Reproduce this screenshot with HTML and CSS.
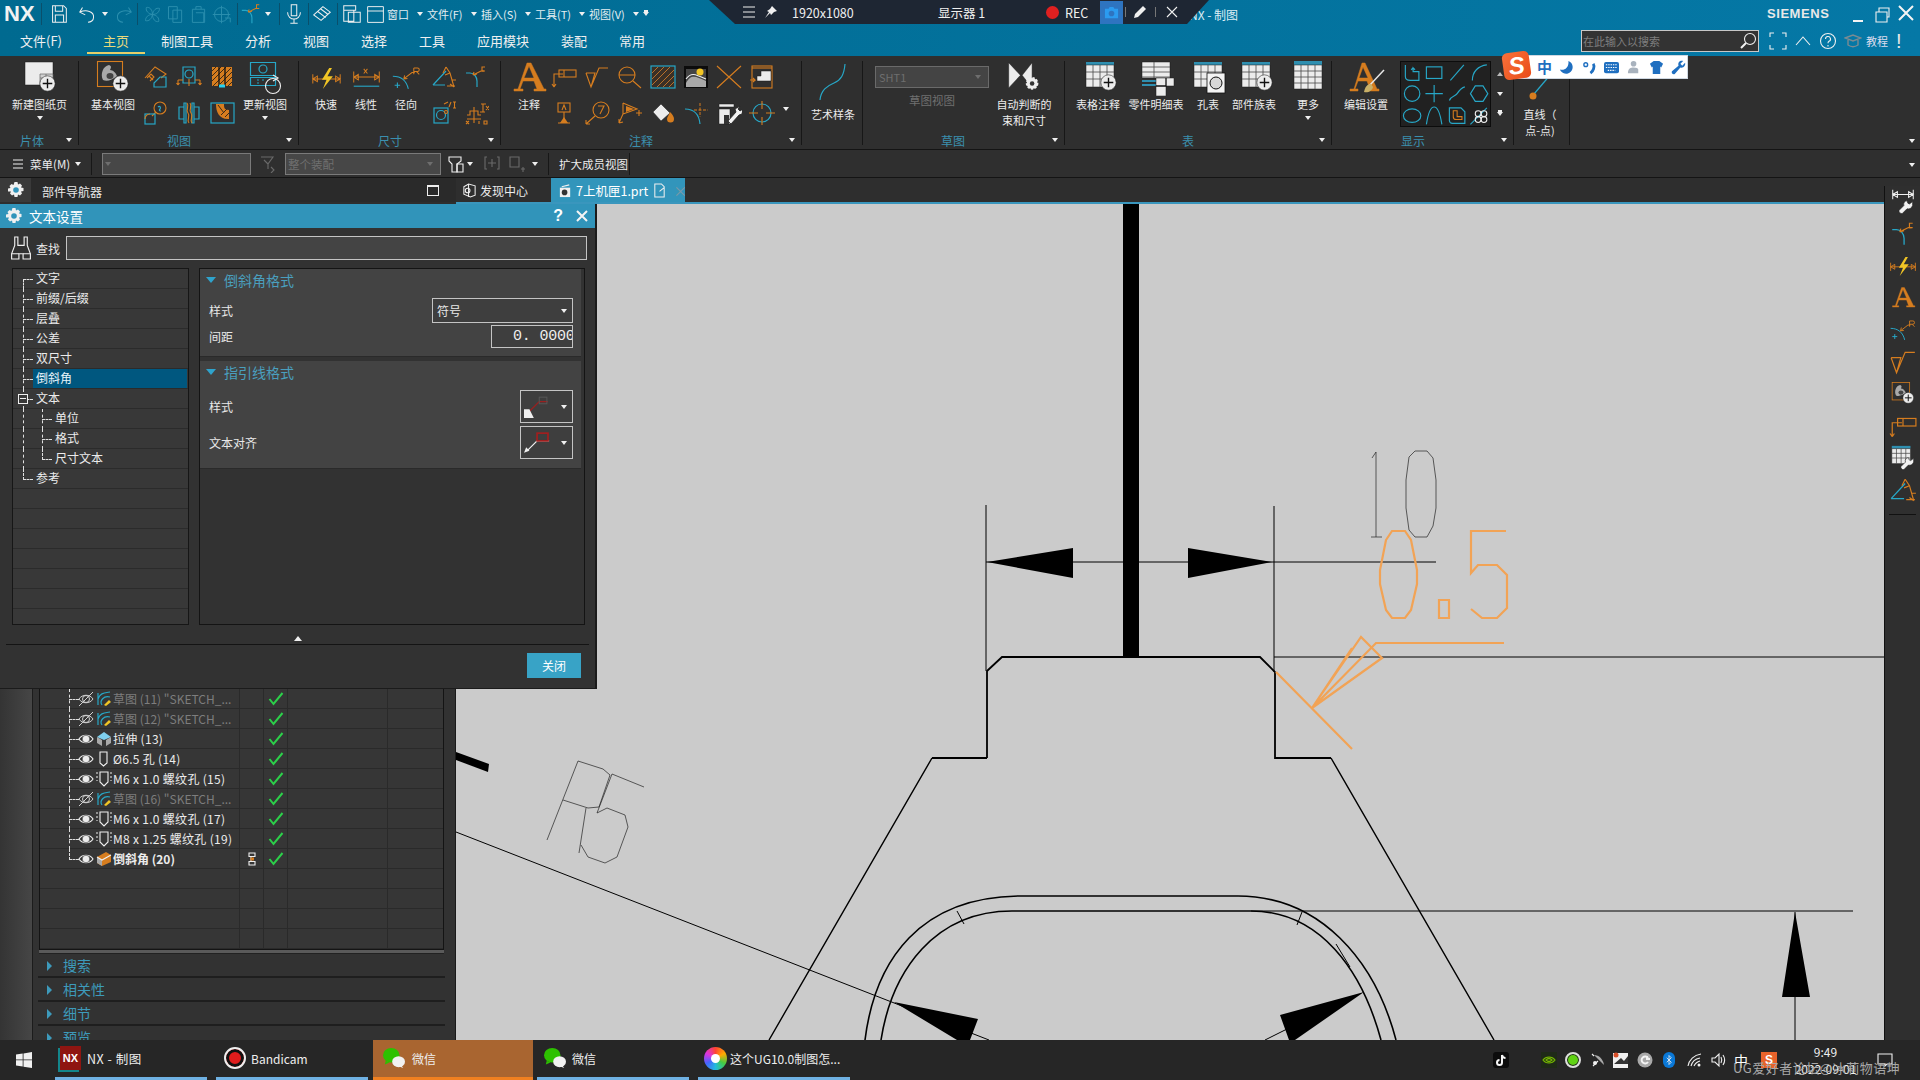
FILE: index.html
```html
<!DOCTYPE html>
<html lang="zh-CN">
<head>
<meta charset="utf-8">
<title>NX - 制图</title>
<link rel="stylesheet" href="styles.css">
</head>
<body>
<svg class="defs" aria-hidden="true">
<defs>
<symbol id="pl" viewBox="0 0 16 16"><circle cx="8" cy="8" r="7.2" class="wf"/><path d="M8 3.5v9M3.5 8h9" class="k"/></symbol>
<symbol id="new" viewBox="0 0 40 36"><rect x="5" y="2" width="28" height="23" class="wf"/><path d="M20 14h13v11H20zM20 18h13M20 21.500h13M26 14v11" class="g"/><use href="#pl" x="19" y="15" width="17" height="17"/></symbol>
<symbol id="base" viewBox="0 0 40 36"><rect x="4.500" y="1.500" width="25" height="25" class="o"/><path d="M10 20c-3-6 0-14 6-15 3 1 2 3 1 5 3 0 6 3 7 6-5 4-10 6-14 4z" class="gf"/><ellipse cx="17" cy="16" rx="3.500" ry="3" class="dk"/><use href="#pl" x="19" y="15" width="17" height="17"/></symbol>
<symbol id="upd" viewBox="0 0 40 36"><path d="M5.500 2.500h25v13h-25zM5.500 17.500h25v8h-25z" class="c"/><circle cx="18" cy="9" r="4" class="c"/><path d="M12 20h2M17 20h2M12 23h2" class="c"/><circle cx="28" cy="26" r="7.500" class="w"/><path d="M28 15l5 3-5 3" class="w"/></symbol>
<symbol id="v1" viewBox="0 0 26 24"><path d="M2 13L12 2l11 7-5 4" class="o"/><path d="M4 13l4-4 3 3-4 4M6 11l4 4" class="o"/><path d="M11 22h12V12h-6l-6 6z" class="c"/></symbol>
<symbol id="v2" viewBox="0 0 26 24"><path d="M7 2h12v16H7z" class="c"/><circle cx="13" cy="9" r="4" class="c"/><path d="M2 15v5M2 20l-1.500-2M2 20l1.500-2M24 15v5M24 20l-1.500-2M24 20l1.500-2M2 15h5M19 15h5M13 14v7" class="o"/></symbol>
<symbol id="v3" viewBox="0 0 26 24"><rect x="3" y="2" width="20" height="19" class="of"/><path d="M3 6l4-4M3 11l9-9M3 16l14-14M4 21l18-18M9 21l14-14M14 21l9-9M19 21l4-4" class="dk2"/><path d="M10 2v19M16 2v19" class="k"/><path d="M10 21h6" class="c2"/></symbol>
<symbol id="v4" viewBox="0 0 26 24"><circle cx="17" cy="7" r="6" class="o"/><path d="M13 11L9 15" class="o"/><path d="M15 6c2-2 3 1 2 2s-1 2 1 2" class="c"/><rect x="2" y="13" width="10" height="10" class="c"/><path d="M7 13a5 5 0 0 0-5 5" class="o"/></symbol>
<symbol id="v5" viewBox="0 0 26 24"><path d="M3 6h5v12H3zM18 6h5v12h-5zM8 2h2v20H8zM16 2h2v20h-2z" class="c"/><path d="M11 2c3 4-2 6 1 10s-2 6 1 10M14 2c3 4-2 6 1 10s-2 6 1 10" class="o"/></symbol>
<symbol id="v6" viewBox="0 0 26 24"><rect x="2" y="2" width="23" height="20" class="c"/><path d="M7 3c0 8 3 15 12 15h1V9c-5 0-5-3-5-6z" class="of"/><path d="M9 4l6 8M12 14l6-6M16 16l4-4" class="dk2"/></symbol>
<symbol id="dq" viewBox="0 0 34 26"><path d="M2 9v10M32 9v10M2 14h30M2 14l5-3v6zM32 14l-5-3v6z" class="o"/><path d="M20 2l-8 13h5l-4 10 11-14h-6l5-9z" class="yf"/></symbol>
<symbol id="dl" viewBox="0 0 34 26"><path d="M3 6v12M31 6v12M3 12h28M3 12l5-3v6zM31 12l-5-3v6z" class="o"/><path d="M14 3l4 5M18 3l-4 5" class="o"/><path d="M3 22h28" class="c"/></symbol>
<symbol id="dr" viewBox="0 0 34 26"><path d="M2 11c9 0 15 5 17 14" class="c"/><path d="M4 21h6M7 18v6" class="c"/><path d="M14 14l9-7h3M14 14l4-.5M14 14l1-4" class="o"/><path d="M25 2v7M25 2h4a2 2 0 0 1 0 4h-4M28 6l3 3" class="o"/></symbol>
<symbol id="da" viewBox="0 0 26 24"><path d="M2 20L15 6M2 20h12" class="c"/><path d="M15 2l4 6 4 14M15 2l-3 6M19 8l-5 2M21 15h4M19 19l4 3M16 21h8" class="o"/></symbol>
<symbol id="dc" viewBox="0 0 26 24"><path d="M3 8h4c4 0 7 4 7 8v6" class="c"/><path d="M10 10l8-4h3M10 10l4-1M10 10l1-3" class="o"/><path d="M22 2h-3v4h3" class="o"/></symbol>
<symbol id="dh" viewBox="0 0 26 24"><rect x="3" y="7" width="14" height="15" class="c"/><circle cx="10" cy="14" r="4.500" class="c"/><path d="M13 3l4-2M18 6l2-5M22 1h3M22 7h3M23.500 1v6" class="o"/><circle cx="15" cy="11" r="1.500" class="o"/></symbol>
<symbol id="do" viewBox="0 0 26 24"><path d="M4 14h3v-4h8v4h3M11 6v16M4 18h14" class="o"/><path d="M18 3h5M20 3v8M17 11h5M23 5l3 4M26 5l-3 4M3 20l3 3M6 20l-3 3M16 20v3M21 20h3v3h-3z" class="o"/></symbol>
<symbol id="big-a" viewBox="0 0 40 36"><path d="M5 31h9v-2h-3l3-8h11l3 8h-3v2h12v-2h-2L22 3h-4L9 29H5zM15 18l5-12 5 12z" class="of2"/></symbol>
<symbol id="nl" viewBox="0 0 26 24"><path d="M3 22V9h9M3 22l-2-3M3 22l2-3" class="o"/><rect x="8" y="5" width="17" height="7" class="o"/><path d="M13 5v7" class="o"/></symbol>
<symbol id="nr" viewBox="0 0 26 24"><path d="M2 8l5 14L15 3h9M2 8h9l-4 14" class="o"/></symbol>
<symbol id="nz" viewBox="0 0 26 24"><circle cx="10" cy="10" r="8" class="o"/><path d="M2 10h16M16 16l8 7" class="o"/></symbol>
<symbol id="nh" viewBox="0 0 26 24"><rect x="2" y="2" width="22" height="20" class="hb"/><path d="M2 8l6-6M2 14L14 2M2 20L20 2M7 22L24 5M13 22l11-11M19 22l5-5" class="ohl"/><rect x="1" y="1" width="24" height="22" class="c"/></symbol>
<symbol id="ni" viewBox="0 0 26 24"><rect x="1" y="1" width="24" height="22" class="kf"/><path d="M3 4h20v18H3z" class="dk"/><path d="M3 18c5-9 9-7 20-2v6H3z" class="gf"/><path d="M3 14c5-7 9-5 20 0" class="w"/><circle cx="17" cy="7" r="3.500" class="yf"/></symbol>
<symbol id="nx" viewBox="0 0 26 24"><path d="M1 1l24 22M25 1L1 23" class="o"/></symbol>
<symbol id="nf" viewBox="0 0 26 24"><rect x="3" y="1" width="20" height="22" class="o"/><path d="M3 3h20" class="o"/><path d="M12 6h10v10H8v-5h4z" class="wf"/><path d="M1 15h5l-2-2M6 15l-2 2" class="o"/></symbol>
<symbol id="nd" viewBox="0 0 26 24"><rect x="7" y="2" width="12" height="9" class="o"/><path d="M11 9l2-5 2 5M13 11v9M7 22h12" class="o"/><path d="M13 16l-4 6h8z" class="of"/></symbol>
<symbol id="nb" viewBox="0 0 26 24"><circle cx="17" cy="9" r="8" class="o"/><path d="M14 5h6l-4 8M11 15L2 23M2 23v-4M2 23h4" class="o"/></symbol>
<symbol id="ng" viewBox="0 0 26 24"><path d="M6 2v11l-4 9M2 22v-4M2 22l4-1M6 2l14 6-14 5" class="o"/><path d="M9 5l8 3-8 3z" class="of"/><path d="M19 12h6M22 9v6" class="o"/></symbol>
<symbol id="nm" viewBox="0 0 26 24"><path d="M11 3l9 9-9 8-8-9z" class="wf"/><path d="M20 11c3 3 4 5 4 7a3 3 0 0 1-7 0c0-2 2-4 3-7z" class="of"/></symbol>
<symbol id="nc" viewBox="0 0 26 24"><path d="M2 8c9 0 14 5 15 15" class="c"/><path d="M17 2v14M11 9h14" class="od"/></symbol>
<symbol id="nt" viewBox="0 0 26 24"><path d="M3 3h15v3H3zM3 8h11v15H3z" class="wf"/><path d="M8 14h5v9H8z" class="dkf"/><path d="M24 5l-5 3 1 3-8 9 3 3 8-9 3-1 1-5-3 2-2-2z" class="w2"/></symbol>
<symbol id="ntg" viewBox="0 0 26 24"><circle cx="13" cy="12" r="9" class="c"/><path d="M0 12h9M17 12h9M13 0v8M13 16v8" class="o"/></symbol>
<symbol id="spl" viewBox="0 0 40 44"><path d="M7 40c1-10 7-14 14-17 7-3 10-8 11-19" class="c"/></symbol>
<symbol id="auto" viewBox="0 0 40 40"><path d="M3 3l13 14L3 31zM29 3v28l-11-14z" class="wf"/><circle cx="29" cy="26" r="6" class="ds"/><circle cx="29" cy="26" r="2.500" class="dkf"/></symbol>
<symbol id="tb" viewBox="0 0 40 36"><rect x="8" y="2" width="28" height="3" class="tf"/><path d="M8 5h28v22H8z" class="wf"/><path d="M8 12h28M8 19h28M15 5v22M22 5v22M29 5v22" class="dk3"/><use href="#pl" x="22" y="14" width="17" height="17"/></symbol>
<symbol id="tp" viewBox="0 0 40 36"><path d="M6 2h28v16H6z" class="wf"/><path d="M6 7h28M6 12h28M6 17h28M18 2v16" class="dk3"/><path d="M6 20h14v2H6zM6 24h14v2H6z" class="tf"/><path d="M20 18h18v8h-8v10h-10z" class="wf"/><path d="M20 26h10v-8" class="k"/></symbol>
<symbol id="th" viewBox="0 0 40 36"><rect x="6" y="2" width="28" height="3" class="tf"/><path d="M6 5h28v22H6z" class="wf"/><path d="M6 12h28M6 19h28M13 5v22M20 5v22M27 5v22" class="dk3"/><rect x="19" y="13" width="18" height="20" class="wk"/><circle cx="28" cy="23" r="6" class="gk"/></symbol>
<symbol id="tm" viewBox="0 0 40 36"><rect x="6" y="1" width="28" height="4" class="tf"/><path d="M6 5h28v24H6z" class="wf"/><path d="M6 11h28M6 17h28M6 23h28M13 5v24M20 5v24M27 5v24" class="dk3"/></symbol>
<symbol id="eset" viewBox="0 0 40 36"><path d="M4 31h8v-2H9l3-8h9l3 8h-3v2h12v-2h-2L19 3h-3L8 29H4zM13 18l4-11 5 11z" class="of2"/><path d="M38 10L23 26" class="w3"/><path d="M25 24c-4 0-6 3-7 8 4 1 8-1 9-5z" class="yf2"/></symbol>
<symbol id="ln" viewBox="0 0 40 44"><path d="M14 34L31 14" class="c"/><circle cx="13" cy="36" r="3.500" class="of"/></symbol>
<symbol id="wr" viewBox="0 0 20 20"><path d="M18 3l-4 3-2-1-1-3c-3 0-5 3-4 6L1 14c-1 2 2 5 4 4l6-6c3 1 6-1 7-4z" class="w2"/></symbol>
<symbol id="eye" viewBox="0 0 16 14"><path d="M1 7c3-5 11-5 14 0-3 5-11 5-14 0z" class="w"/><circle cx="8" cy="7" r="3.800" class="wf"/></symbol>
<symbol id="eyex" viewBox="0 0 16 14"><path d="M1 7c3-5 11-5 14 0-3 5-11 5-14 0z" class="w4"/><circle cx="8" cy="7" r="3.500" class="w4"/><path d="M1 14L15 0" class="w4"/></symbol>
<symbol id="sk" viewBox="0 0 16 16"><path d="M2 2v12M2 8c2-6 6-6 12-7M6 14c-3-4 2-10 8-8" class="c"/><path d="M8 14l5-5 2 2-5 4z" class="yf"/></symbol>
<symbol id="ext" viewBox="0 0 16 16"><path d="M1 6l7-5 7 5-7 3z" class="tl"/><path d="M1 6v6l5 3V9zM15 6v6l-5 3V9z" class="gf"/></symbol>
<symbol id="hole" viewBox="0 0 16 16"><path d="M4 1h7v11l-3.500 3L4 12z" class="w"/></symbol>
<symbol id="thd" viewBox="0 0 16 16"><path d="M4 1h8v10l-4 4-4-4z" class="w"/><path d="M1 1v9M15 1v9" class="wd"/></symbol>
<symbol id="cham" viewBox="0 0 16 16"><path d="M1 6l9-5 5 3v7l-9 4-5-3z" class="of"/><path d="M1 6l5 3v6l-5-3z" class="gf"/><path d="M1 6l5 3 9-5" class="w"/></symbol>
<symbol id="chk" viewBox="0 0 16 14"><path d="M1.500 7l4 5L14.500 1" class="gr"/></symbol>
<symbol id="gear" viewBox="0 0 16 16"><path d="M6.500 0h3l.5 2.500 2-1 2 2-1 2 2.500.5v3l-2.500.5 1 2-2 2-2-1-.5 2.500h-3l-.5-2.500-2 1-2-2 1-2L0 9.500v-3l2.500-.5-1-2 2-2 2 1z" class="wfn"/><circle cx="8" cy="8" r="2.800" class="gap"/></symbol>
<symbol id="wrdim" viewBox="0 0 26 30"><path d="M2 2v10M24 2v10M2 7h22M2 7l5-3v6zM24 7l-5-3v6z" class="w"/><use href="#wr" x="8" y="12" width="17" height="17"/></symbol>
<symbol id="tbw" viewBox="0 0 26 30"><rect x="1" y="2" width="20" height="3" class="tf"/><path d="M1 5h20v16H1z" class="wf"/><path d="M1 10h20M1 15h20M6 5v16M11 5v16M16 5v16" class="dk3"/><use href="#wr" x="10" y="13" width="16" height="16"/></symbol>
<symbol id="wxs" viewBox="0 0 26 24"><ellipse cx="10" cy="9" rx="9" ry="8" class="wxg"/><path d="M4 15l-1 4 5-2z" class="wxg"/><ellipse cx="18" cy="16" rx="7" ry="6" class="wxw"/><path d="M21 20l2 3-5-2z" class="wxw"/></symbol>
</defs>
</svg>

<div class="app">
  <header class="head">
    <div class="title-row">
      <div class="qat">
        <b class="nx">NX</b><i class="sep sx"></i>
        <svg class="q m5" viewBox="0 0 24 24"><path d="M5 3h12l3 3v15H5zM8 3v6h8V3M8 21v-8h9v8" class="w"/></svg>
        <svg class="q" viewBox="0 0 24 24"><path d="M6 5L3 10l6 3M3 10c7-3 16-1 15 6 0 3-3 5-6 5" class="w"/></svg>
        <i class="dd c12"></i>
        <svg class="q" viewBox="0 0 24 24"><path d="M18 5l3 5-6 3M21 10c-7-3-16-1-15 6 0 3 3 5 6 5" class="dim"/></svg>
        <i class="sep s1"></i>
        <svg class="q3" viewBox="0 0 24 24"><path d="M12 12c-5-1-8-4-7-8 4-1 7 3 7 8zM12 12c5 1 8 4 7 8-4 1-7-3-7-8zM12 12c-1 5-4 8-8 7 0-4 3-7 8-7zM12 12c1-5 4-8 8-7 0 4-3 7-8 7z" class="dim"/></svg>
        <svg class="q3" viewBox="0 0 24 24"><path d="M4 3h10v14H4zM9 7h10v14H9z" class="dim"/></svg>
        <svg class="q3" viewBox="0 0 24 24"><path d="M5 6h14v15H5zM9 6V3h6v3M9 10h9v11" class="dim"/></svg>
        <svg class="q3" viewBox="0 0 24 24"><circle cx="12" cy="12" r="8" class="dim"/><path d="M2 12h20M12 2v20M16 16h6v5" class="dim"/></svg>
        <i class="sep s4"></i>
        <svg class="q" viewBox="0 0 26 24"><use href="#dc"/></svg>
        <i class="dd c12"></i>
        <i class="sep s5"></i>
        <svg class="q" viewBox="0 0 24 24"><path d="M9 2h6v12H9zM5 10c0 10 14 10 14 0M12 18v4M8 22h8" class="w"/></svg>
        <i class="sep s2"></i>
        <svg class="q" viewBox="0 0 24 24"><path d="M3 13l10-9 8 6-10 9zM7 9l9 7M10 6l8 6" class="w"/></svg>
        <i class="sep s3"></i>
        <svg class="q" viewBox="0 0 24 24"><path d="M3 3h13v5H3zM3 8h11v12H3zM8 10h13v11H8z" class="w"/></svg>
        <svg class="q3" viewBox="0 0 24 24"><path d="M3 3h18v18H3zM3 8h18" class="w"/></svg>
        <span class="qm qw">窗口<i class="dd"></i></span>
        <span class="qm">文件(F)<i class="dd"></i></span>
        <span class="qm">插入(S)<i class="dd"></i></span>
        <span class="qm">工具(T)<i class="dd"></i></span>
        <span class="qm">视图(V)<i class="dd"></i></span>
        <i class="dd ddl"></i>
      </div>
      <span class="app-title">NX - 制图</span>
      <div class="win">
        <b class="siemens">SIEMENS</b>
        <svg class="wb" viewBox="0 0 24 24"><path d="M7 19h10" class="w2n"/></svg>
        <svg class="wb" viewBox="0 0 24 24"><path d="M6 10h11v10H6zM9 10V6h10v9h-2" class="w"/></svg>
        <svg class="wb" viewBox="0 0 24 24"><path d="M5 4l14 14M19 4L5 18" class="w2n"/></svg>
      </div>
    </div>
    <div class="tab-row">
      <nav class="tabs">
        <span class="tab tab-file">文件(F)</span>
        <span class="tab tab-on">主页</span>
        <span class="tab">制图工具</span>
        <span class="tab">分析</span>
        <span class="tab">视图</span>
        <span class="tab">选择</span>
        <span class="tab">工具</span>
        <span class="tab">应用模块</span>
        <span class="tab">装配</span>
        <span class="tab">常用</span>
      </nav>
      <div class="tools-r">
        <div class="search"><span>在此输入以搜索</span>
          <svg class="sic" viewBox="0 0 18 18"><circle cx="11" cy="7" r="5.500" class="w"/><path d="M7 11l-5 5" class="w2n"/></svg></div>
        <svg class="ti" viewBox="0 0 18 18"><path d="M1 5V1h4M13 1h4v4M17 13v4h-4M5 17H1v-4" class="w"/></svg>
        <svg class="ti" viewBox="0 0 18 18"><path d="M2 13l7-8 7 8" class="w"/></svg>
        <svg class="ti" viewBox="0 0 18 18"><circle cx="9" cy="9" r="7.500" class="w"/><path d="M6.500 7a2.500 2.500 0 1 1 3.500 2.300c-.8.500-1 1-1 2M9 13v1.500" class="w"/></svg>
        <svg class="ti" viewBox="0 0 18 18"><path d="M1 6l8-3 8 3-8 3zM4 8v5c3 2 7 2 10 0V8" class="hat"/></svg>
        <span class="tut">教程</span>
        <b class="bang">!</b>
      </div>
    </div>
  </header>

  <section class="ribbon">
    <div class="grp g1">
      <div class="gb">
        <div class="big b-center"><svg class="bi"><use href="#new"/></svg><span>新建图纸页</span><i class="dd"></i></div>
      </div>
      <div class="gf"><span class="gl gl1">片体</span><i class="dd"></i></div>
    </div>
    <div class="grp g2">
      <div class="gb">
        <div class="big w60"><svg class="bi"><use href="#base"/></svg><span>基本视图</span></div>
        <div class="sg c3">
          <svg class="si"><use href="#v1"/></svg><svg class="si"><use href="#v2"/></svg><svg class="si"><use href="#v3"/></svg>
          <svg class="si"><use href="#v4"/></svg><svg class="si"><use href="#v5"/></svg><svg class="si"><use href="#v6"/></svg>
        </div>
        <div class="big w60"><svg class="bi"><use href="#upd"/></svg><span>更新视图</span><i class="dd"></i></div>
      </div>
      <div class="gf"><span class="gl gl2">视图</span><i class="dd"></i></div>
    </div>
    <div class="grp g3">
      <div class="gb">
        <div class="big w40"><svg class="bi dimi"><use href="#dq"/></svg><span>快速</span></div>
        <div class="big w40"><svg class="bi dimi"><use href="#dl"/></svg><span>线性</span></div>
        <div class="big w40"><svg class="bi dimi"><use href="#dr"/></svg><span>径向</span></div>
        <div class="sg c2">
          <svg class="si"><use href="#da"/></svg><svg class="si"><use href="#dc"/></svg>
          <svg class="si"><use href="#dh"/></svg><svg class="si"><use href="#do"/></svg>
        </div>
      </div>
      <div class="gf"><span class="gl gl3">尺寸</span><i class="dd"></i></div>
    </div>
    <div class="grp g4">
      <div class="gb">
        <div class="big w44"><svg class="bi"><use href="#big-a"/></svg><span>注释</span></div>
        <div class="sg c7">
          <svg class="si"><use href="#nl"/></svg><svg class="si"><use href="#nr"/></svg><svg class="si"><use href="#nz"/></svg><svg class="si"><use href="#nh"/></svg><svg class="si"><use href="#ni"/></svg><svg class="si"><use href="#nx"/></svg><svg class="si"><use href="#nf"/></svg>
          <svg class="si"><use href="#nd"/></svg><svg class="si"><use href="#nb"/></svg><svg class="si"><use href="#ng"/></svg><svg class="si"><use href="#nm"/></svg><svg class="si"><use href="#nc"/></svg><svg class="si"><use href="#nt"/></svg><svg class="si"><use href="#ntg"/></svg>
        </div>
        <i class="dd dd-side"></i>
      </div>
      <div class="gf"><span class="gl gl4">注释</span><i class="dd"></i></div>
    </div>
    <div class="grp g5">
      <div class="gb">
        <div class="big w60 tall"><svg class="bi"><use href="#spl"/></svg><span>艺术样条</span></div>
      </div>
      <div class="gf"></div>
    </div>
    <div class="grp g6">
      <div class="gb">
        <div class="sheet"><div class="combo-dim">SHT1<i class="dd"></i></div><span>草图视图</span></div>
        <div class="big w70"><svg class="bi"><use href="#auto"/></svg><span>自动判断的<br>束和尺寸</span></div>
      </div>
      <div class="gf"><span class="gl gl6">草图</span><i class="dd"></i></div>
    </div>
    <div class="grp g7">
      <div class="gb">
        <div class="big w60"><svg class="bi"><use href="#tb"/></svg><span>表格注释</span></div>
        <div class="big w56"><svg class="bi"><use href="#tp"/></svg><span>零件明细表</span></div>
        <div class="big w48"><svg class="bi"><use href="#th"/></svg><span>孔表</span></div>
        <div class="big w44"><svg class="bi"><use href="#tb"/></svg><span>部件族表</span></div>
        <div class="big w44 ml10"><svg class="bi"><use href="#tm"/></svg><span>更多</span><i class="dd"></i></div>
      </div>
      <div class="gf"><span class="gl gl7">表</span><i class="dd"></i></div>
    </div>
    <div class="grp g8">
      <div class="gb">
        <div class="big w60"><svg class="bi"><use href="#eset"/></svg><span>编辑设置</span></div>
        <div class="gallery">
          <svg viewBox="0 0 20 20"><path d="M3 2v12c0 3 2 4 5 4h9V9H11V5l2 2M11 5L9 7" class="c"/></svg>
          <svg viewBox="0 0 20 20"><rect x="2" y="4" width="16" height="12" class="c"/></svg>
          <svg viewBox="0 0 20 20"><path d="M3 18L17 2" class="c"/></svg>
          <svg viewBox="0 0 20 20"><path d="M3 18C3 9 9 3 18 2" class="c"/></svg>
          <svg viewBox="0 0 20 20"><circle cx="10" cy="10" r="8" class="c"/></svg>
          <svg viewBox="0 0 20 20"><path d="M10 1v18M1 10h18" class="c"/></svg>
          <svg viewBox="0 0 20 20"><path d="M2 17c2-5 6-4 8-7s4-6 8-7" class="c"/></svg>
          <svg viewBox="0 0 20 20"><path d="M6 2h8l5 8-5 8H6l-5-8z" class="c"/></svg>
          <svg viewBox="0 0 20 20"><ellipse cx="10" cy="10" rx="9" ry="7" class="c"/></svg>
          <svg viewBox="0 0 20 20"><path d="M2 19C4 6 7 1 10 1s6 5 8 18" class="c"/></svg>
          <svg viewBox="0 0 20 20"><path d="M2 2h12l4 4v12H5a3 3 0 0 1-3-3z" class="c"/><path d="M6 5h4v6h5v3H9a3 3 0 0 1-3-3z" class="o"/></svg>
          <svg viewBox="0 0 20 20"><path d="M1 19L18 2" class="c"/><circle cx="9" cy="8" r="3" class="w"/><circle cx="15" cy="8" r="3" class="w"/><circle cx="9" cy="14" r="3" class="w"/><circle cx="15" cy="14" r="3" class="w"/></svg>
        </div>
        <div class="gal-side"><i class="dd up"></i><i class="dd"></i><i class="dd dd-bar"></i></div>
      </div>
      <div class="gf"><span class="gl gl8">显示</span><i class="dd"></i></div>
    </div>
    <div class="grp g9">
      <div class="gb">
        <div class="big w52 tall"><svg class="bi"><use href="#ln"/></svg><span>直线（<br>点-点)</span></div>
      </div>
      <div class="gf"></div>
    </div>
    <i class="dd ribbon-more"></i>
  </section>

  <section class="toolbar">
    <svg class="burger" viewBox="0 0 12 12"><path d="M1 2h10M1 6h10M1 10h10" class="w"/></svg>
    <span class="menu-lbl">菜单(M)</span><i class="dd mr9"></i><i class="sep tsep"></i>
    <div class="tcombo c1"><i class="dd dim-dd"></i></div>
    <svg class="ticon" viewBox="0 0 18 18"><path d="M2 2h12L9 9v5M5 5l4 4" class="dg"/><path d="M12 12l3 3-3 3" class="dg"/></svg>
    <div class="tcombo c2c">整个装配<i class="dd dim-dd"></i></div>
    <svg class="ticon ml6" viewBox="0 0 18 18"><path d="M2 2h12v4l-4 3v8H5V9L2 6z" class="w"/><path d="M10 9h6v8h-6z" class="w"/></svg>
    <i class="dd ml2"></i>
    <svg class="ticon ml10" viewBox="0 0 18 18"><path d="M3 2H1v12h2M13 2h2v12h-2M8 4v8M4 8h8" class="dg"/></svg>
    <svg class="ticon ml6" viewBox="0 0 18 18"><path d="M2 2h9v10H2zM13 14h4M15 12v5" class="dg"/></svg>
    <i class="dd ml6"></i>
    <i class="sep tsep2"></i>
    <span class="menu-lbl ml10">扩大成员视图</span>
    <i class="sep tsep3"></i>
    <i class="dd ribbon-more tb-more"></i>
  </section>

  <section class="doc-row">
    <div class="nav-head">
      <span class="nav-gear"><svg class="gear16"><use href="#gear"/></svg></span>
      <span class="nav-title">部件导航器</span>
      <span class="maxbox"></span>
    </div>
    <div class="dtab"><svg class="dtic" viewBox="0 0 16 16"><path d="M2 4l5-3 7 2v10l-5 2-7-3zM7 1v14" class="w"/><circle cx="6" cy="8" r="2.500" class="w"/></svg>发现中心</div>
    <div class="dtab dtab-on"><svg class="dtic" viewBox="0 0 16 16"><rect x="2" y="5" width="11" height="10" class="wfn"/><circle cx="7" cy="10" r="3" class="dkf"/><path d="M4 4l8-2" class="w"/></svg>7上机匣1.prt<svg class="dtic ml4" viewBox="0 0 16 16"><path d="M3 1h7l3 3v11H3zM8 9l5-4" class="w"/></svg><span class="dtx">×</span></div>
  </section>

  <main class="work">
    <aside class="nav">
      <div class="nav-strip"></div>
      <div class="nav-body">
        <div class="ptable">
          <div class="prow"><div class="pn"><i class="conn"></i><svg class="eye"><use href="#eyex"/></svg><svg class="pi"><use href="#sk"/></svg><span class="pt off">草图 (11) "SKETCH_...</span></div><div></div><div class="pc"><svg class="chk"><use href="#chk"/></svg></div><div></div><div></div></div>
          <div class="prow"><div class="pn"><i class="conn"></i><svg class="eye"><use href="#eyex"/></svg><svg class="pi"><use href="#sk"/></svg><span class="pt off">草图 (12) "SKETCH_...</span></div><div></div><div class="pc"><svg class="chk"><use href="#chk"/></svg></div><div></div><div></div></div>
          <div class="prow"><div class="pn"><i class="conn"></i><svg class="eye"><use href="#eye"/></svg><svg class="pi"><use href="#ext"/></svg><span class="pt">拉伸 (13)</span></div><div></div><div class="pc"><svg class="chk"><use href="#chk"/></svg></div><div></div><div></div></div>
          <div class="prow"><div class="pn"><i class="conn"></i><svg class="eye"><use href="#eye"/></svg><svg class="pi"><use href="#hole"/></svg><span class="pt">Ø6.5 孔 (14)</span></div><div></div><div class="pc"><svg class="chk"><use href="#chk"/></svg></div><div></div><div></div></div>
          <div class="prow"><div class="pn"><i class="conn"></i><svg class="eye"><use href="#eye"/></svg><svg class="pi"><use href="#thd"/></svg><span class="pt">M6 x 1.0 螺纹孔 (15)</span></div><div></div><div class="pc"><svg class="chk"><use href="#chk"/></svg></div><div></div><div></div></div>
          <div class="prow"><div class="pn"><i class="conn"></i><svg class="eye"><use href="#eyex"/></svg><svg class="pi"><use href="#sk"/></svg><span class="pt off">草图 (16) "SKETCH_...</span></div><div></div><div class="pc"><svg class="chk"><use href="#chk"/></svg></div><div></div><div></div></div>
          <div class="prow"><div class="pn"><i class="conn"></i><svg class="eye"><use href="#eye"/></svg><svg class="pi"><use href="#thd"/></svg><span class="pt">M6 x 1.0 螺纹孔 (17)</span></div><div></div><div class="pc"><svg class="chk"><use href="#chk"/></svg></div><div></div><div></div></div>
          <div class="prow"><div class="pn"><i class="conn"></i><svg class="eye"><use href="#eye"/></svg><svg class="pi"><use href="#thd"/></svg><span class="pt">M8 x 1.25 螺纹孔 (19)</span></div><div></div><div class="pc"><svg class="chk"><use href="#chk"/></svg></div><div></div><div></div></div>
          <div class="prow"><div class="pn"><i class="conn last"></i><svg class="eye"><use href="#eye"/></svg><svg class="pi"><use href="#cham"/></svg><span class="pt cur">倒斜角 (20)</span></div><div class="pc"><svg class="dep" viewBox="0 0 8 14"><path d="M1 1h6v3.500H1zM1 9.500h6V13H1zM3 4.500v5" class="w"/><rect x="2.500" y="5.500" width="3.500" height="3" class="of"/></svg></div><div class="pc"><svg class="chk"><use href="#chk"/></svg></div><div></div><div></div></div>
          <div class="prow"><div class="pn"></div><div></div><div></div><div></div><div></div></div>
          <div class="prow"><div class="pn"></div><div></div><div></div><div></div><div></div></div>
          <div class="prow"><div class="pn"></div><div></div><div></div><div></div><div></div></div>
          <div class="prow"><div class="pn"></div><div></div><div></div><div></div><div></div></div>
        </div>
        <div class="splitter"></div>
        <div class="fold"><i class="tri-r"></i>搜索</div>
        <div class="fold"><i class="tri-r"></i>相关性</div>
        <div class="fold"><i class="tri-r"></i>细节</div>
        <div class="fold"><i class="tri-r"></i>预览</div>
      </div>
    </aside>

    <div class="canvas">
      <svg class="draw" viewBox="456 204 1428 836">
        <rect x="1123" y="204" width="16" height="454" class="blk"/>
        <path d="M456 752l33 12-1 8-32-12z" class="blk"/>
        <path d="M986 505v166M1274 506v166M986 562h450" class="thin"/>
        <path d="M987 562l86-14v30zM1272 562l-84-14v30z" class="blk"/>
        <path d="M987 758V671l15-14h258l15 15v86h56" class="body"/>
        <path d="M987 758h-55" class="body"/>
        <path d="M932 758L769 1040M1331 758l163 282" class="slope"/>
        <path d="M1274 657h610" class="thin"/>
        <path d="M865 1040C875 960 920 896 1022 896H1238C1320 896 1375 960 1396 1040" class="arc"/>
        <path d="M881 1040C892 970 935 911 1012 911H1251C1320 911 1362 970 1381 1040" class="arc"/>
        <path d="M1251 911h602M1795 912v128M456 832l533 208M1289 1028l-24 12M957 911l7 13M1302 912l-5 13M1336 944l14 23" class="thin"/>
        <path d="M894 1002l84 17-8 21h-13zM1364 992l-84 23 9 25h6zM1795 912l-13 85h28z" class="blk"/>
        <path d="M547 840l31-79 25 8 7 6-11 32-11 1-25-8M586 808l-7 45M644 787l-32-13-15 39 10-5 18 7 3 12-11 30-12 6-17-6-7-12M1372 458l4-6v85M1371 537h11M1409 457l6-6h12l6 7 3 22v28l-3 18-6 11h-12l-6-7-3-22v-28z" class="hair"/>
        <path d="M1386 540l6-9h13l6 9 6 30v14l-6 26-6 8h-13l-6-8-6-26v-14zM1439 600h10v18h-10zM1506 531h-35v42l7-8h19l10 10v33l-10 10h-15l-11-9M1504 643h-128l-64 65 49-71 21 21-70 50 40-60M1276 672l76 77" class="ora"/>
      </svg>
    </div>

    <aside class="rail">
      <svg class="ri"><use href="#wrdim"/></svg>
      <svg class="ri"><use href="#dc"/></svg>
      <svg class="ri"><use href="#dq"/></svg>
      <svg class="ri"><use href="#big-a"/></svg>
      <svg class="ri"><use href="#dr"/></svg>
      <svg class="ri"><use href="#nr"/></svg>
      <svg class="ri"><use href="#base"/></svg>
      <svg class="ri"><use href="#nl"/></svg>
      <svg class="ri"><use href="#tbw"/></svg>
      <svg class="ri"><use href="#da"/></svg>
      <i class="rail-line"></i>
    </aside>
  </main>

  <footer class="taskbar">
    <svg class="win-logo" viewBox="0 0 16 16"><path d="M0 2.500L6.700 1.500v6H0zM7.500 1.400L16 0v7.500H7.500zM0 8.300h6.700v6.300L0 13.600zM7.500 8.300H16V16l-8.500-1.300z" class="wfn"/></svg>
    <div class="task t-nx"><span class="nxi"><b>NX</b></span>NX - 制图</div>
    <div class="task t-bd"><span class="bdi"></span>Bandicam</div>
    <div class="task t-wx"><svg class="wxi"><use href="#wxs"/></svg>微信</div>
    <div class="task t-wx2"><svg class="wxi"><use href="#wxs"/></svg>微信</div>
    <div class="task t-ch"><span class="chi"></span>这个UG10.0制图怎...</div>
    <div class="tray">
      <svg class="tr tk" viewBox="0 0 16 16"><rect width="16" height="16" rx="3" class="kfn"/><path d="M9 3v7.500a2.500 2.500 0 1 1-2.500-2.500M9 3c.5 2 2 3 3.500 3" class="tkp"/></svg>
      <svg class="tr nv" viewBox="0 0 16 16"><rect width="16" height="16" class="nvb"/><path d="M2 8c3-4 9-4 12 0-3 4-9 4-12 0zM5 8c2-2 4-2 6 0-2 2-4 2-6 0z" class="nvp"/></svg>
      <span class="tr grn"></span>
      <svg class="tr sat" viewBox="0 0 16 16"><path d="M5 3c5 0 9 4 10 10L5 3z" class="gf"/><path d="M3 2l2 2M9 9l-5 5" class="w"/><circle cx="6" cy="11" r="2" class="wfn"/></svg>
      <svg class="tr" viewBox="0 0 16 16"><rect y="1" width="15" height="15" class="wfn"/><path d="M1 12L8 6l3 3 4-5v8z" class="dkf"/><circle cx="3" cy="3" r="2.500" class="redf"/></svg>
      <svg class="tr" viewBox="0 0 16 16"><circle cx="8" cy="8" r="7.500" class="gfn"/><path d="M11 6a3.500 3.500 0 1 0 0 4M10 4v3h3" class="w2n"/></svg>
      <span class="tr bt"><svg viewBox="0 0 10 16"><path d="M2 5l6 6-3 3V2l3 3-6 6" class="w"/></svg></span>
      <svg class="tr" viewBox="0 0 16 16"><path d="M1 14C2 8 7 3 14 2M4 14c1-4 4-7 9-8M7 14c1-2 2-4 6-5" class="w"/><circle cx="12" cy="13" r="1.500" class="wfn"/></svg>
      <svg class="tr" viewBox="0 0 16 16"><path d="M1 6h3l4-4v12l-4-4H1zM10 5c1 2 1 4 0 6M12 3c2 3 2 7 0 10" class="w"/></svg>
      <span class="tr ime">中</span>
      <span class="tr so">S</span>
      <div class="clock"><span>9:49</span><span>2022-09-01</span></div>
      <svg class="tr notif" viewBox="0 0 16 16"><path d="M1 2h14v10h-5l-2 2v-2H1z" class="w"/></svg>
    </div>
    <span class="wm">UG爱好者论坛@冰莉物语坤</span>
  </footer>
</div>

<div class="bandi">
  <svg class="bd-i" viewBox="0 0 14 14"><path d="M1 2h12M1 7h12M1 12h12" class="w"/></svg>
  <svg class="bd-i ml8" viewBox="0 0 14 14"><path d="M8 1l5 5-3 1-3 3-1-2-5 5 4-6-2-1 3-2z" class="wfn"/></svg>
  <span class="bd-res">1920x1080</span>
  <span class="bd-mon">显示器 1</span>
  <span class="bd-rec"></span><span class="bd-txt">REC</span>
  <span class="bd-cam"><svg viewBox="0 0 16 16"><path d="M1 4h4l1-2h4l1 2h4v10H1z" class="camf"/><circle cx="8" cy="9" r="3" class="bluef"/></svg></span>
  <i class="bd-sep"></i>
  <svg class="bd-i" viewBox="0 0 14 14"><path d="M10 1l3 3-8 8-4 1 1-4z" class="wfn"/></svg>
  <i class="bd-sep bd-sep2"></i>
  <svg class="bd-i" viewBox="0 0 14 14"><path d="M2 2l10 10M12 2L2 12" class="w"/></svg>
</div>

<div class="sogou">
  <span class="so-s">S</span>
  <b>中</b>
  <svg viewBox="0 0 16 16"><path d="M10 1a7 7 0 1 1-9 9c5 2 10-3 9-9z" class="bl"/></svg>
  <svg viewBox="0 0 16 16"><circle cx="4" cy="5" r="2" class="blo"/><path d="M12 4c2 3 0 8-3 10" class="blw"/></svg>
  <svg viewBox="0 0 16 16"><rect y="2" width="16" height="12" rx="2" class="bl"/><path d="M2 5h12M2 8h12M4 11h8" class="kb"/></svg>
  <svg viewBox="0 0 16 16"><circle cx="7" cy="4" r="3" class="grey"/><path d="M1 14c0-5 3-6 6-6s5 1 5 2v4z" class="grey"/></svg>
  <svg viewBox="0 0 16 16"><path d="M1 4l4-3h6l4 3-2 4-1-1v8H4V7L3 8z" class="bl"/></svg>
  <svg viewBox="0 0 16 16"><path d="M15 3l-3 3-2-2 3-3c-3-1-6 1-5 5L1 12c-1 2 1 4 3 3l6-7c3 1 6-2 5-5z" class="bl"/></svg>
</div>

<section class="dlg">
  <header class="dlg-head"><svg class="gear16"><use href="#gear"/></svg><span class="dlg-title">文本设置</span><b class="dlg-q">?</b><svg class="dlg-x" viewBox="0 0 12 12"><path d="M1 1l10 10M11 1L1 11" class="w2n"/></svg></header>
  <div class="dlg-find">
    <svg class="bino" viewBox="2 1 20 23"><path d="M6 2h3v8h6V2h3v8l3 8v5h-7v-5h-4v5H3v-5l3-8z" class="w"/><path d="M3 18h7M14 18h7" class="w"/></svg>
    <span>查找</span><div class="find-in"></div>
  </div>
  <div class="dlg-main">
    <div class="tree">
      <div class="trow"><i class="conn first"></i>文字</div>
      <div class="trow"><i class="conn"></i>前缀/后缀</div>
      <div class="trow"><i class="conn"></i>层叠</div>
      <div class="trow"><i class="conn"></i>公差</div>
      <div class="trow"><i class="conn"></i>双尺寸</div>
      <div class="trow"><i class="conn"></i><span class="tsel">倒斜角</span></div>
      <div class="trow"><i class="conn"><u class="minus"></u></i>文本</div>
      <div class="trow"><i class="tv"></i><i class="conn"></i>单位</div>
      <div class="trow"><i class="tv"></i><i class="conn"></i>格式</div>
      <div class="trow"><i class="tv"></i><i class="conn last"></i>尺寸文本</div>
      <div class="trow"><i class="conn last"></i>参考</div>
      <div class="trow"></div><div class="trow"></div><div class="trow"></div><div class="trow"></div><div class="trow"></div><div class="trow"></div><div class="trow"></div>
    </div>
    <div class="panel">
      <div class="sec sec1">
        <div class="sec-h"><i class="tri-d"></i>倒斜角格式</div>
        <div class="f f1"><span>样式</span><div class="sel sel-t">符号<i class="dd"></i></div></div>
        <div class="f f2"><span>间距</span><div class="num">0. 00000</div></div>
      </div>
      <div class="sec sec2">
        <div class="sec-h"><i class="tri-d"></i>指引线格式</div>
        <div class="f f3"><span>样式</span><div class="sel sel-i"><svg viewBox="0 0 26 22"><path d="M5 17l11-11h8" class="redk"/><rect x="16" y="2" width="7" height="6" class="greyk"/><path d="M2 13h5l4 8H2z" class="wfn"/></svg><i class="dd"></i></div></div>
        <div class="f f4"><span>文本对齐</span><div class="sel sel-i"><svg viewBox="0 0 26 22"><path d="M5 18l9-9h11" class="w"/><rect x="14" y="2" width="10" height="7" class="red"/><path d="M2 20l5-2-3-3z" class="wfn"/></svg><i class="dd"></i></div></div>
      </div>
    </div>
  </div>
  <div class="dlg-exp"><i class="dd up"></i></div>
  <div class="dlg-foot"><button class="close">关闭</button></div>
</section>
</body>
</html>
```
FILE: styles.css
```css
*{box-sizing:border-box}
html,body{margin:0;width:1920px;height:1080px;overflow:hidden;background:#2f2f2f}
body{font-family:"Noto Sans CJK SC","Liberation Sans",sans-serif;color:#e8e8e8;font-size:12px;position:relative}
i,u{font-style:normal;text-decoration:none}
.defs{position:absolute;width:0;height:0}
.app{display:flex;flex-direction:column;width:1920px;height:1080px}

/* svg paint classes */
.o{fill:none;stroke:#d67d1f;stroke-width:1.100}
.od{fill:none;stroke:#d67d1f;stroke-width:1;stroke-dasharray:3 1.500}
.c{fill:none;stroke:#27a7c7;stroke-width:1.200}
.c2{fill:none;stroke:#27d0f0;stroke-width:3}
.w{fill:none;stroke:#f0f0f0;stroke-width:1.100}
.w2n{fill:none;stroke:#f4f4f4;stroke-width:2}
.w3{fill:none;stroke:#e8e8e8;stroke-width:1.500}
.w4{fill:none;stroke:#cfcfcf;stroke-width:1}
.wd{fill:none;stroke:#f0f0f0;stroke-width:1;stroke-dasharray:2 2}
.w2{fill:#f2f2f2;stroke:#222;stroke-width:.8}
.wf{fill:#ececec;stroke:#1a1a1a;stroke-width:.5}
.wfn{fill:#f0f0f0}
.wk{fill:#f4f4f4;stroke:#111;stroke-width:.8}
.k{fill:none;stroke:#111;stroke-width:1.300}
.kf,.kfn{fill:#0c0c0c}
.g{fill:#d0d0d0;stroke:#666;stroke-width:.7}
.gf,.gfn{fill:#a9a9a9}
.gk{fill:#d8d8d8;stroke:#111;stroke-width:1}
.dk{fill:#444}
.dkf{fill:#333}
.dk2{fill:none;stroke:#3a2a18;stroke-width:1}
.dk3{fill:none;stroke:#4a4a4a;stroke-width:.8}
.ds{fill:#eee;stroke:#eee;stroke-width:2;stroke-dasharray:2.500 1.500}
.of{fill:#d67d1f}
.of2{fill:#d67d1f;stroke:#d67d1f;stroke-width:.5}
.hb{fill:#3a3026}
.ohl{fill:none;stroke:#b8702a;stroke-width:1}
.yf{fill:#f1c525}
.yf2{fill:#c9b068}
.tf{fill:#2f8fb0}
.tl{fill:#7fd0ee}
.dim{fill:none;stroke:#2b8fae;stroke-width:1.100}
.dg{fill:none;stroke:#6a6a6a;stroke-width:1.100}
.gr{fill:none;stroke:#2cd04a;stroke-width:2}
.gap{fill:#3194ba}
.hat{fill:none;stroke:#7b8b92;stroke-width:1.400}
.redk{fill:none;stroke:#9a2020;stroke-width:1.200}
.red{fill:none;stroke:#a01f1f;stroke-width:1.600}
.greyk{fill:none;stroke:#555;stroke-width:1}
.nvb{fill:#1f2a18}
.nvp{fill:none;stroke:#76b900;stroke-width:1.200}
.tkp{fill:none;stroke:#f5f5f5;stroke-width:2}
.redf{fill:#d9502a}
.wxg{fill:#2dc100}
.wxw{fill:#f1f1f1}
.camf{fill:#2b9bf0}
.bluef{fill:#2e74c0}
.bl{fill:#1f6fc0}
.blo{fill:none;stroke:#1f6fc0;stroke-width:1.500}
.blw{fill:none;stroke:#1f6fc0;stroke-width:3}
.kb{fill:none;stroke:#fff;stroke-width:1.200;stroke-dasharray:1.500 1}
.grey{fill:#a8b2bd}

.dd{display:inline-block;width:0;height:0;border-left:3.500px solid transparent;border-right:3.500px solid transparent;border-top:4px solid #f0f0f0;flex:none}
.dd.up{border-top:0;border-bottom:4px solid #bbb}

/* header */
.head{height:56px;flex:none;background:linear-gradient(90deg,#006a90,#0578a6);display:flex;flex-direction:column}
.title-row{height:28px;display:flex;align-items:center}
.qat{width:1189px;flex:none;display:flex;align-items:center;padding-left:4px;height:28px}
.nx{width:32px;font:700 22px/28px "Liberation Sans",sans-serif;color:#f2f2f2;margin-right:5px}
.sep{width:1px;height:22px;background:#0a4f6b;flex:none}
.sx{margin-right:5px}
.s1{margin:0 3px 0 2px}
.s4{margin:0 1px 0 4px}
.s5{margin:0 2px 0 5px}
.s2{margin:0 1px 0 2px}
.s3{margin:0 2px 0 3px}
.q{width:24px;height:22px;flex:none}
.q3{width:23px;height:21px;flex:none}
.m5{margin-right:5px}
.c12{margin:0 3px 0 2px}
.qm{display:flex;align-items:center;gap:8px;width:54px;font-size:11px;white-space:nowrap;color:#e4eef2;flex:none}
.qw{width:40px;margin-left:0}
.ddl{margin-left:0;box-shadow:0 -3px 0 -1px #f0f0f0}
.app-title{font-size:12px;color:#dfeef5;width:80px;flex:none;white-space:nowrap}
.win{margin-left:auto;display:flex;align-items:center;height:28px;padding-right:2px}
.siemens{font:700 13px/28px "Liberation Sans",sans-serif;letter-spacing:.55px;width:79px}
.wb{width:24px;height:24px;flex:none}
.tab-row{height:28px;display:flex;align-items:center;justify-content:space-between}
.tabs{display:flex;height:28px;padding-left:4px}
.tab{padding:0 16px;font-size:13px;line-height:26px;height:26px;color:#f0f0f0;white-space:nowrap}
.tab-file{margin-right:9px}
.tab-on{color:#e9d97c;border-bottom:2px solid #e6cf6a}
.tools-r{display:flex;align-items:center;height:28px}
.search{width:178px;height:22px;margin-bottom:2px;background:#333;border:1px solid #c8c8c8;display:flex;align-items:center;justify-content:space-between;font-size:11px;color:#7e7e7e;padding:0 1px}
.sic{width:18px;height:18px}
.ti{width:18px;height:18px;margin-left:7px;margin-bottom:2px;flex:none}
.tools-r .search + .ti{margin-left:10px}
.tut{font-size:11px;margin:0 0 2px 4px;width:30px;color:#dde}
.bang{font:400 20px/20px "Liberation Sans",sans-serif;margin-bottom:2px;width:24px}

/* ribbon */
.ribbon{height:94px;flex:none;background:#2f2f2f;display:flex;border-bottom:1px solid #141414;position:relative}
.grp{display:flex;flex-direction:column;height:93px;position:relative}
.grp::after{content:"";position:absolute;right:0;top:5px;bottom:4px;width:1px;background:#171717}
.gb{height:76px;display:flex;align-items:flex-start;padding-top:4px;flex:none}
.gf{height:17px;display:flex;align-items:center;position:relative}
.gf .dd{position:absolute;right:7px;top:6px}
.gl{position:absolute;top:0;font-size:12px;line-height:17px;color:#3b8fae;white-space:nowrap}
.g1{width:79px}.g2{width:220px}.g3{width:202px}.g4{width:301px}.g5{width:61px}.g6{width:202px}.g7{width:267px}.g8{width:182px}.g9{width:56px}
.g2 .gb{padding-left:4px}.g3 .gb{padding-left:7px}.g4 .gb{padding-left:6px}.g5 .gb{padding-left:1px}.g6 .gb{padding-left:12px}.g7 .gb{padding-left:3px}.g8 .gb{padding-left:4px}.g9 .gb{padding-left:0}
.gl1{left:20px}.gl2{left:88px}.gl3{left:79px}.gl4{left:128px}.gl6{left:78px}.gl7{left:117px}.gl8{left:69px}
.big{display:flex;flex-direction:column;align-items:center;flex:none;font-size:11px;line-height:16px;text-align:center;color:#ececec}
.big .bi{width:40px;height:36px;flex:none}
.big .bi.dimi{width:31px}
.big span{white-space:nowrap}
.big .dd{margin-top:4px}
.b-center{width:79px}
.w40{width:40px}.w44{width:44px}.w48{width:48px}.w52{width:52px}.w56{width:56px}.w60{width:60px}.w70{width:70px}
.ml10{margin-left:10px}.ml2{margin-left:2px}.ml4{margin-left:4px}.ml6{margin-left:6px}.ml8{margin-left:8px}.mr9{margin-right:10px}
.tall .bi{height:44px;margin-bottom:2px}
.sg{display:grid;grid-template-rows:24px 24px;row-gap:12px;column-gap:7px;margin-top:5px;grid-auto-rows:24px;flex:none}
.c3{grid-template-columns:repeat(3,26px)}
.c2{grid-template-columns:repeat(2,26px);column-gap:6px;margin-left:5px}
.c7{grid-template-columns:repeat(7,26px)}
.si{width:26px;height:24px}
.dd-side{margin:47px 0 0 8px}
.sheet{width:114px;margin-top:6px;text-align:center;font-size:11.500px;color:#6f6f6f;line-height:16px;flex:none}
.combo-dim{height:22px;border:1px solid #6a6a6a;background:#444;color:#6e6e6e;text-align:left;padding:0 3px;line-height:20px;font-size:11px;display:flex;align-items:center;justify-content:space-between;margin-bottom:4px}
.combo-dim .dd{border-top-color:#6e6e6e;margin-right:4px}
.gallery{width:91px;height:66px;margin:1px 0 0 4px;background:#212121;border:1px solid #0c0c0c;display:grid;grid-template-columns:repeat(4,1fr);grid-template-rows:repeat(3,1fr);flex:none;padding:1px;gap:2px}
.gallery svg{width:100%;height:100%}
.gal-side{width:14px;height:60px;margin:4px 0 0 2px;display:flex;flex-direction:column;justify-content:space-between;align-items:center;padding:8px 0}
.dd-bar{box-shadow:0 -3px 0 -1px #f0f0f0}
.ribbon-more{position:absolute;right:5px;bottom:6px}

/* toolbar */
.toolbar{height:28px;flex:none;background:#2f2f2f;border-bottom:1px solid #141414;display:flex;align-items:center;position:relative;padding-left:12px}
.burger{width:12px;height:12px;margin-right:6px;flex:none}
.menu-lbl{font-size:11.500px;white-space:nowrap;width:45px;color:#ececec}
.menu-lbl.ml10{width:66px}
.tsep{height:22px;background:#171717}
.tcombo{height:22px;border:1px solid #7a7a7a;background:#474747;color:#707070;font-size:11.500px;line-height:20px;padding-left:2px;display:flex;justify-content:space-between;align-items:center}
.c1{width:149px;margin-left:10px}
.c2c{width:156px}
.dim-dd{border-top-color:#6e6e6e;margin-right:7px}
.ticon{width:18px;height:18px;margin-left:8px;margin-right:8px;flex:none}
.ticon.ml6{margin:0 0 0 6px}
.ticon.ml10{margin:0 0 0 11px}
.tsep2{margin-left:10px;height:22px;background:#171717}
.tsep3{margin-left:4px;height:22px;background:#171717}
.tb-more{bottom:10px}

/* doc tabs */
.doc-row{height:26px;flex:none;background:#2e2e2e;display:flex;position:relative}
.nav-head{width:456px;flex:none;height:24px;background:#2a2a2a;display:flex;align-items:center}
.nav-gear{width:31px;height:24px;background:#3a3a3a;display:flex;align-items:center;justify-content:center;flex:none}
.gear16{width:16px;height:16px;flex:none}
.nav-title{margin-left:11px;font-size:12px;flex:1;padding-top:2px}
.maxbox{width:12px;height:11px;border:1px solid #eee;border-top-width:2px;margin-right:17px}
.dtab{height:24px;display:flex;align-items:center;font-size:12px;white-space:nowrap;color:#ececec;padding-left:6px;width:95px;flex:none}
.dtab-on{background:#3295bb;height:26px;width:134px;padding-left:7px;padding-bottom:2px;color:#fff;font-size:12.500px}
.dtic{width:15px;height:15px;margin-right:3px;flex:none}
.dtx{color:#7a99a8;font-size:14px;margin-left:3px}
.doc-row::after{content:"";position:absolute;left:456px;right:35px;bottom:0;height:2px;background:#3a96bd}

/* work */
.work{flex:1;display:flex;min-height:0;background:#cbcbcb}
.nav{width:456px;flex:none;display:flex;background:#323232;overflow:hidden;border-right:1px solid #1a1a1a}
.nav-strip{width:33px;flex:none;background:linear-gradient(90deg,#343434,#464646);border-right:1px solid #1c1c1c}
.nav-body{flex:1;padding:485px 10px 0 6px;overflow:hidden}
.ptable{width:405px;border-left:1px solid #141414;border-right:1px solid #141414;background:#363636}
.prow{display:grid;grid-template-columns:200px 24px 24px 100px 55px;height:20px;border-bottom:1px solid #2a2a2a}
.prow>div{border-right:1px solid #2a2a2a;display:flex;align-items:center;height:20px;min-width:0}
.prow>div:last-child{border-right:0}
.pn{padding-left:29px}
.pc{justify-content:center}
.eye{width:16px;height:14px;margin-left:-1px;flex:none}
.pi{width:16px;height:16px;margin:0 1px 0 2px;flex:none}
.pt{font-size:12px;white-space:nowrap;color:#ececec;line-height:20px;letter-spacing:.3px}
.pt.off{color:#7d7d7d;letter-spacing:0}
.pt.cur{font-weight:700;letter-spacing:0}
.chk{width:16px;height:14px}
.dep{width:8px;height:14px}
.conn{display:block;width:10px;height:20px;position:relative;flex:none;align-self:flex-start}
.conn::before{content:"";position:absolute;left:0;top:0;bottom:0;border-left:1px dashed #e0e0e0}
.conn::after{content:"";position:absolute;left:0;right:0;top:10px;border-top:1px dashed #e0e0e0}
.conn.first::before{top:10px}
.conn.last::before{bottom:9px}
.splitter{width:405px;height:5px;background:#5a5a5a;border-top:1px solid #141414;border-bottom:1px solid #222}
.fold{width:407px;height:24px;margin-left:-1px;border-bottom:2px solid #1e1e1e;color:#3d9abb;font-size:14px;line-height:23px;padding-left:9px;display:flex;align-items:center;gap:11px;padding-top:1px}
.tri-r{width:0;height:0;border-top:5px solid transparent;border-bottom:5px solid transparent;border-left:5px solid #3d9abb;flex:none}
.canvas{flex:1;overflow:hidden;background:#cbcbcb;min-width:0}
.draw{display:block;width:1428px;height:836px}
.blk{fill:#000}
.thin{fill:none;stroke:#000;stroke-width:1}
.hair{fill:none;stroke:#222;stroke-width:.7}
.body{fill:none;stroke:#000;stroke-width:1.800}
.slope{fill:none;stroke:#000;stroke-width:1.400}
.arc{fill:none;stroke:#000;stroke-width:1.600}
.ora{fill:none;stroke:#f2a355;stroke-width:2.200}
.rail{width:36px;flex:none;background:#2f2f2f;border-left:1px solid #111;display:flex;flex-direction:column;align-items:center;margin-top:-18px;position:relative}
.ri{width:28px;height:28px;margin:2px 0;flex:none}
.rail-line{width:27px;height:1px;background:#111;margin-top:8px}

/* taskbar */
.taskbar{height:40px;flex:none;background:#262626;display:flex;align-items:stretch;position:relative}
.win-logo{width:16px;height:16px;margin:12px 15px 0 16px;flex:none}
.task{display:flex;align-items:center;gap:3px;font-size:12px;color:#eee;border-bottom:3px solid #6fb1e3;padding-bottom:1px;flex:none;white-space:nowrap}
.t-nx{width:152px;margin-left:8px;padding-left:5px;gap:6px;font-size:12.500px;letter-spacing:.5px}
.t-bd{width:152px;margin-left:9px;padding-left:8px;gap:5px}
.t-wx{width:160px;margin-left:5px;padding-left:9px;background:#a96530;border-bottom-color:#f08020;gap:6px}
.t-wx2{width:152px;margin-left:4px;padding-left:6px;gap:5px}
.t-ch{width:152px;margin-left:9px;padding-left:6px;gap:3px;font-size:12px}
.nxi{width:21px;height:24px;background:#8f1511;box-shadow:-2px 2px 0 #13868c;display:flex;align-items:center;justify-content:center;color:#fff;font-size:11px;letter-spacing:0}
.nxi b{font:700 11px "Liberation Sans",sans-serif}
.bdi{width:22px;height:22px;border-radius:50%;background:#e01c1c;border:2px solid #eee;box-shadow:inset 0 0 0 3px #111}
.wxi{width:24px;height:22px;flex:none}
.chi{width:23px;height:23px;border-radius:50%;background:conic-gradient(#f43,#fa0,#4c4,#2bd,#46f,#d3d,#f43);position:relative}
.chi::after{content:"";position:absolute;inset:7px;border-radius:50%;background:#fff}
.tray{position:absolute;left:1490px;top:0;height:40px;display:flex;align-items:center;width:430px}
.tr{width:16px;height:16px;flex:none;margin-right:8px}
.tk{margin-left:3px;margin-right:32px}
.grn{width:16px;height:16px;border-radius:50%;background:#5fd212;border:2px solid #ddd;box-shadow:inset 0 0 0 1px #222}
.bt{width:12px;height:16px;background:#0a78d7;border-radius:6px;margin:0 12px 0 2px;display:flex;align-items:center;justify-content:center}
.bt svg{width:8px;height:12px}
.ime{font-size:14px;line-height:16px;color:#fff;margin-left:-1px;margin-right:11px}
.so{background:#e8632b;color:#fff;font:700 12px/16px "Liberation Sans",sans-serif;text-align:center;margin-right:0}
.clock{width:85px;margin-left:6px;display:flex;flex-direction:column;align-items:center;font-size:12px;line-height:17px;color:#eee}
.notif{margin:0 0 0 9px}
.wm{position:absolute;left:1733px;top:18px;font-size:13px;line-height:20px;letter-spacing:.5px;color:#a8a8a8;white-space:nowrap}

/* bandicam */
.bandi{position:absolute;left:709px;top:0;width:500px;height:24px;background:#1e2633;clip-path:polygon(0 0,100% 0,478px 100%,26px 100%);display:flex;align-items:center;padding-left:33px;color:#f0f0f0;font-size:12.500px;z-index:3}
.bd-i{width:14px;height:14px;flex:none}
.bd-res{margin-left:14px;width:146px}
.bd-mon{width:108px}
.bd-rec{width:13px;height:13px;border-radius:50%;background:#e02020;margin-right:6px}
.bd-txt{width:35px}
.bd-cam{width:23px;height:23px;background:#2e74c0;display:flex;align-items:center;justify-content:center}
.bd-cam svg{width:15px;height:15px}
.bd-sep{width:1px;height:10px;background:#777;margin:0 7px 0 2px}
.bd-sep2{margin:0 9px 0 8px}

/* sogou */
.sogou{position:absolute;left:1515px;top:55px;width:173px;height:24px;background:#fff;border:1px solid #cfd8e2;display:flex;align-items:center;padding-left:21px;gap:7.400px;color:#1f6fc0;z-index:3}
.sogou b{font:700 15px/20px "Noto Sans CJK SC",sans-serif}
.sogou svg{width:15px;height:15px;flex:none}
.so-s{position:absolute;left:-13px;top:-4px;width:27px;height:27px;background:linear-gradient(135deg,#f9713a,#e94c18);border-radius:5px;transform:rotate(-8deg);color:#fff;font:italic 700 24px/27px "Liberation Sans",sans-serif;text-align:center}

/* dialog */
.dlg{position:absolute;left:0;top:204px;width:597px;height:485px;background:#323232;border-right:2px solid #1b1b1b;border-bottom:1px solid #1b1b1b;display:flex;flex-direction:column;z-index:2}
.dlg-head{height:24px;flex:none;background:#3194ba;display:flex;align-items:center;padding-left:6px;color:#fff}
.dlg-title{margin-left:7px;font-size:13.500px;flex:1}
.dlg-q{font:700 16px "Liberation Sans",sans-serif;margin-right:13px}
.dlg-x{width:12px;height:12px;margin-right:7px}
.dlg-find{height:40px;flex:none;display:flex;align-items:center;padding:0 8px 0 9px;font-size:12px}
.bino{width:24px;height:24px;margin-right:3px;flex:none}
.find-in{flex:1;height:24px;background:#444;border:1px solid #c4c4c4;margin-left:6px}
.dlg-main{display:flex;margin-left:12px;height:357px;flex:none}
.tree{width:177px;height:357px;border:1px solid #161616;background:#383838;flex:none;overflow:hidden}
.trow{height:20px;border-bottom:1px solid #2b2b2b;display:flex;align-items:center;padding:0 0 1px 10px;font-size:12px;line-height:18px;white-space:nowrap;gap:3px;color:#ececec}
.tsel{flex:1;background:#00577f;margin:0 1px 0 -3px;padding-left:3px;height:19px;color:#e8f4fa}
.tv{display:block;width:16px;height:20px;border-left:1px dashed #e0e0e0;flex:none;align-self:flex-start}
.minus{position:absolute;left:-5px;top:5px;width:10px;height:10px;border:1px solid #eee;background:#383838;z-index:1}
.minus::after{content:"";position:absolute;left:1px;right:1px;top:3px;height:1px;background:#eee}
.panel{width:386px;height:357px;margin-left:10px;border:1px solid #141414;background:#323232;flex:none;padding-right:3px}
.sec{background:#434343;position:relative}
.sec1{height:88px;border-bottom:1px solid #2a2a2a}
.sec2{height:108px;margin-top:4px;border-bottom:1px solid #2a2a2a}
.sec-h{height:22px;display:flex;align-items:center;gap:8px;padding-left:6px;color:#4a9fbe;font-size:14px}
.tri-d{width:0;height:0;border-left:5px solid transparent;border-right:5px solid transparent;border-top:6px solid #2fa3cc;flex:none}
.f{display:flex;align-items:center;justify-content:space-between;padding:0 9px 0 9px;font-size:12px}
.sel{border:1px solid #c4c4c4;background:#3e3e3e;display:flex;align-items:center;justify-content:space-between;padding-right:5px;margin-right:-1px}
.sel-t{width:141px;height:25px;padding-left:4px}
.sel-i{width:53px;height:33px}
.sel-i svg{width:30px;height:24px}
.f1{height:25px;margin-top:7px}
.f2{height:23px;margin-top:2px}
.f3{height:33px;margin-top:7px}
.f4{height:33px;margin-top:3px}
.num{width:82px;height:23px;border:1px solid #c4c4c4;background:#3e3e3e;font:15px/21px "Liberation Mono",monospace;padding-left:21px;overflow:hidden;color:#eee;white-space:nowrap;margin-right:-1px;letter-spacing:-.2px}
.dlg-exp{height:20px;flex:none;display:flex;align-items:center;justify-content:center;margin:0 6px;border-bottom:1px solid #141414;padding-top:8px}
.dlg-exp .dd.up{border-bottom:5px solid #f0f0f0;border-left-width:4.500px;border-right-width:4.500px}
.dlg-foot{flex:1;display:flex;justify-content:flex-end;padding:8px 14px 0 0}
.close{width:54px;height:25px;border:0;background:#38a3c6;color:#fff;font:12px "Noto Sans CJK SC",sans-serif;padding:0}
```
